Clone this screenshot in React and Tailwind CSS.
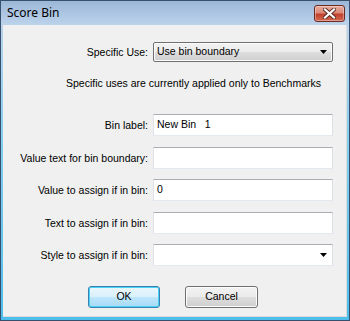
import React from "react";

function Arrow() {
  return (
    <svg width="7" height="4" viewBox="0 0 7 4" className="block">
      <path d="M0 0H7L3.5 4Z" fill="#000" />
    </svg>
  );
}

function Field({ label, value, combo, top }) {
  return (
    <div className={`flex items-center ${top}`}>
      <div className="w-[145px] text-right pr-0 leading-[13px]">{label}</div>
      <div className="ml-[5px] w-[180px] h-[22px] bg-white border border-[#abadb3] border-l-[#e2e3ea] border-r-[#dbdfe6] border-b-[#e3e9ef] flex items-center pl-[3px] pr-[5px]">
        <span className="flex-1 whitespace-pre">{value}</span>
        {combo && <Arrow />}
      </div>
    </div>
  );
}

export default function App() {
  return (
    <div
      className="w-[350px] h-[321px] border border-[#37506d] bg-[linear-gradient(to_bottom,#9cb7d7_0px,#bcd3eb_24px,#8ccfee_120px,#4dbdeb_320px)] flex flex-col text-black"
      style={{ fontFamily: '"Liberation Sans", Arial, sans-serif' }}
    >
      <div className="h-[24px] flex items-start relative">
        <span
          className="ml-[6px] mt-[4px] text-[12px] leading-[15px] text-black"
          style={{ fontFamily: '"Noto Sans", "Open Sans", sans-serif' }}
        >
          Score Bin
        </span>
        <div className="absolute left-[313px] top-[4px] w-[31px] h-[17px] rounded-[3px] border border-[#6b2b25] bg-[linear-gradient(to_bottom,#e9ab9c_0%,#d98a78_45%,#c2412c_55%,#d36a52_100%)] flex items-center justify-center shadow-[inset_0_0_0_1px_rgba(255,255,255,0.35)]">
          <svg width="13" height="11" viewBox="0 0 13 11">
            <path d="M2 1.5L11 9.5M11 1.5L2 9.5" stroke="#5a2a22" strokeWidth="4" strokeLinecap="square" />
            <path d="M2 1.5L11 9.5M11 1.5L2 9.5" stroke="#fff" strokeWidth="2.2" strokeLinecap="square" />
          </svg>
        </div>
      </div>
      <div className="ml-[2px] mr-[2px] mb-[3px] flex-1 bg-[#f0f0f0] border-r border-b border-[#dcdcdc] text-[10.5px]">
        <div className="flex items-center mt-[17px]">
          <div className="w-[145px] text-right leading-[13px]">Specific Use:</div>
          <div className="ml-[5px] w-[180px] h-[20px] rounded-[2px] border border-[#707070] bg-[linear-gradient(to_bottom,#f2f2f2_0%,#ebebeb_50%,#dddddd_51%,#cfcfcf_100%)] flex items-center pl-[3px] pr-[5px] shadow-[inset_0_0_0_1px_#fcfcfc]">
            <span className="flex-1">Use bin boundary</span>
            <Arrow />
          </div>
        </div>
        <div className="mt-[15px] ml-[63px] leading-[13px]">
          Specific uses are currently applied only to Benchmarks
        </div>
        <Field label="Bin label:" value="New Bin   1" top="mt-[24px]" />
        <Field label="Value text for bin boundary:" value="" top="mt-[11px]" />
        <Field label="Value to assign if in bin:" value="0" top="mt-[10px]" />
        <Field label="Text to assign if in bin:" value="" top="mt-[11px]" />
        <Field label="Style to assign if in bin:" value="" combo top="mt-[10px]" />
        <div className="flex mt-[20px] ml-[85px] gap-[25px]">
          <div className="w-[72px] h-[22px] rounded-[3px] border border-[#3c7fb1] bg-[linear-gradient(to_bottom,#eaf6fd_0%,#d9f0fc_50%,#bee6fd_51%,#a7d9f5_100%)] shadow-[inset_0_0_0_1px_#48d2f7] flex items-center justify-center">
            OK
          </div>
          <div className="w-[73px] h-[22px] rounded-[3px] border border-[#707070] bg-[linear-gradient(to_bottom,#f2f2f2_0%,#ebebeb_50%,#dddddd_51%,#cfcfcf_100%)] shadow-[inset_0_0_0_1px_#fcfcfc] flex items-center justify-center">
            Cancel
          </div>
        </div>
      </div>
    </div>
  );
}
